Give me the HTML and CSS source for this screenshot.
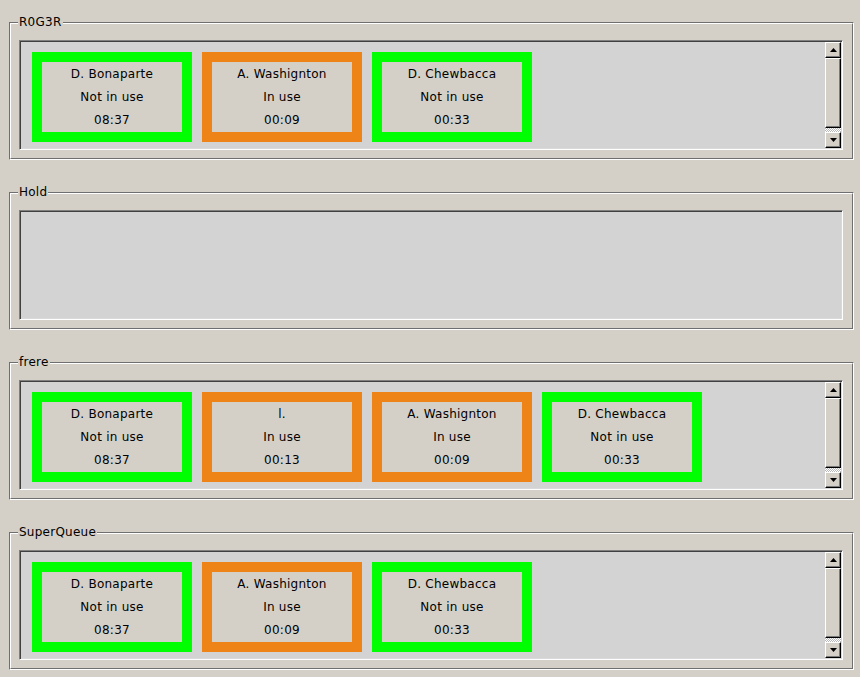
FILE: index.html
```html
<!DOCTYPE html>
<html>
<head>
<meta charset="utf-8">
<link rel="stylesheet" href="styles.css">
</head>
<body>
<div class="app">

  <section class="group">
    <span class="legend">R0G3R</span>
    <div class="groove">
      <div class="box">
        <div class="cards">
          <div class="card free"><div>D. Bonaparte</div><div>Not in use</div><div>08:37</div></div>
          <div class="card busy"><div>A. Washignton</div><div>In use</div><div>00:09</div></div>
          <div class="card free"><div>D. Chewbacca</div><div>Not in use</div><div>00:33</div></div>
        </div>
        <div class="scrollbar">
          <div class="sb-btn"><svg width="7" height="4" viewBox="0 0 7 4"><path d="M3.5 0L7 4H0z"/></svg></div>
          <div class="sb-trough"><div class="sb-slider"></div></div>
          <div class="sb-btn"><svg width="7" height="4" viewBox="0 0 7 4"><path d="M0 0H7L3.5 4z"/></svg></div>
        </div>
      </div>
    </div>
  </section>

  <section class="group">
    <span class="legend">Hold</span>
    <div class="groove">
      <div class="box"></div>
    </div>
  </section>

  <section class="group">
    <span class="legend">frere</span>
    <div class="groove">
      <div class="box">
        <div class="cards">
          <div class="card free"><div>D. Bonaparte</div><div>Not in use</div><div>08:37</div></div>
          <div class="card busy"><div>l.</div><div>In use</div><div>00:13</div></div>
          <div class="card busy"><div>A. Washignton</div><div>In use</div><div>00:09</div></div>
          <div class="card free"><div>D. Chewbacca</div><div>Not in use</div><div>00:33</div></div>
        </div>
        <div class="scrollbar">
          <div class="sb-btn"><svg width="7" height="4" viewBox="0 0 7 4"><path d="M3.5 0L7 4H0z"/></svg></div>
          <div class="sb-trough"><div class="sb-slider"></div></div>
          <div class="sb-btn"><svg width="7" height="4" viewBox="0 0 7 4"><path d="M0 0H7L3.5 4z"/></svg></div>
        </div>
      </div>
    </div>
  </section>

  <section class="group">
    <span class="legend">SuperQueue</span>
    <div class="groove">
      <div class="box">
        <div class="cards">
          <div class="card free"><div>D. Bonaparte</div><div>Not in use</div><div>08:37</div></div>
          <div class="card busy"><div>A. Washignton</div><div>In use</div><div>00:09</div></div>
          <div class="card free"><div>D. Chewbacca</div><div>Not in use</div><div>00:33</div></div>
        </div>
        <div class="scrollbar">
          <div class="sb-btn"><svg width="7" height="4" viewBox="0 0 7 4"><path d="M3.5 0L7 4H0z"/></svg></div>
          <div class="sb-trough"><div class="sb-slider"></div></div>
          <div class="sb-btn"><svg width="7" height="4" viewBox="0 0 7 4"><path d="M0 0H7L3.5 4z"/></svg></div>
        </div>
      </div>
    </div>
  </section>

</div>
</body>
</html>
```

FILE: styles.css
```css
* { box-sizing: border-box; }

html, body {
  margin: 0;
  background: #d4d0c8;
}

body {
  width: 860px;
  height: 677px;
  overflow: hidden;
  font-family: "DejaVu Sans", "Liberation Sans", sans-serif;
  font-size: 12px;
  letter-spacing: 0.25px;
  color: #000;
}

.app {
  display: flex;
  flex-direction: column;
  gap: 32px;
  padding: 22px 6px 0 9px;
}

.group {
  position: relative;
  height: 138px;
  border: 1px solid;
  border-color: #6f6f6f #fff #fff #6f6f6f;
}

.legend {
  position: absolute;
  left: 8px;
  top: -8px;
  padding: 0 1px;
  line-height: 14px;
  background: #d4d0c8;
}

.groove {
  height: 100%;
  border: 1px solid;
  border-color: #fff #6f6f6f #6f6f6f #fff;
  padding: 16px 9px 8px 8px;
}

.box {
  height: 110px;
  display: flex;
  background: #d3d3d3;
  border: 1px solid;
  border-color: #808080 #fff #fff #808080;
  box-shadow: inset 1px 1px 0 #404040, inset -1px -1px 0 #d9d9d9;
  padding: 1px;
}

.cards {
  flex: 1;
  display: flex;
  align-items: flex-start;
  gap: 10px;
  padding: 10px 11px;
}

.card {
  width: 160px;
  height: 90px;
  flex: none;
  border: 10px solid #00ff00;
  background: #d4d0c8;
  text-align: center;
  line-height: 23px;
  padding-top: 1px;
  white-space: nowrap;
}

.card.busy { border-color: #ee8318; }

.scrollbar {
  width: 16px;
  display: flex;
  flex-direction: column;
}

.sb-btn {
  height: 16px;
  flex: none;
  display: flex;
  align-items: center;
  justify-content: center;
  background: #d4d0c8;
  border: 1px solid;
  border-color: #fff #000 #000 #fff;
  box-shadow: inset -1px -1px 0 #7a7a7a;
}

.sb-btn svg { display: block; fill: #000; }

.sb-trough {
  flex: 1;
  background: repeating-conic-gradient(#ffffff 0 25%, #b8b8b8 0 50%) 0 0 / 2px 2px;
}

.sb-slider {
  height: 70px;
  background: #d4d0c8;
  border: 1px solid;
  border-color: #fff #000 #000 #fff;
  box-shadow: inset -1px -1px 0 #7a7a7a;
}
```
